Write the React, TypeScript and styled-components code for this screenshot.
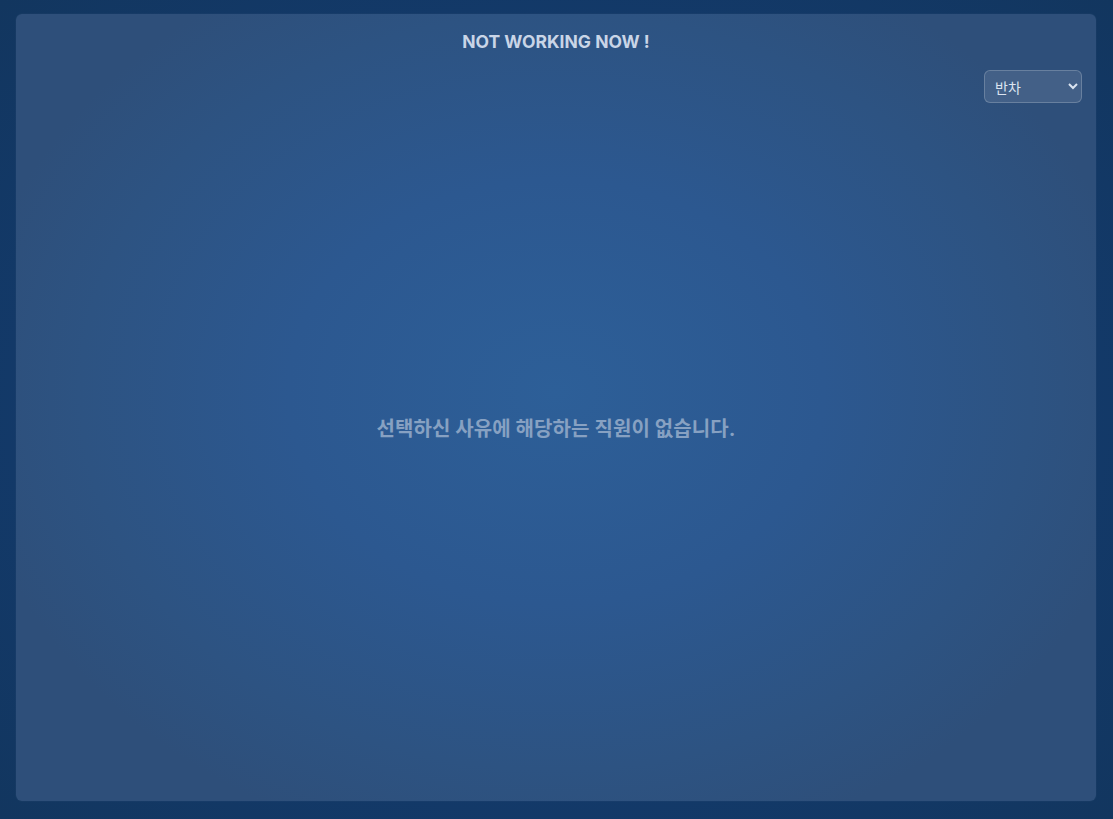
import React from "react";
import styled, { createGlobalStyle } from "styled-components";

const GlobalStyle = createGlobalStyle`
  html, body {
    margin: 0;
    padding: 0;
    height: 100%;
  }
  body {
    font-family: Inter, "Noto Sans CJK KR", "Noto Sans", sans-serif;
    background: #143a6b;
  }
  #root {
    height: 100%;
  }
`;

const Page = styled.div`
  box-sizing: border-box;
  width: 100%;
  height: 819px;
  padding: 14px 17px 18px 16px;
  display: flex;
  background: radial-gradient(ellipse at 50% 50%, #164279 0%, #133a6b 60%, #12365f 100%);
`;

const Card = styled.div`
  flex: 1;
  display: flex;
  flex-direction: column;
  border-radius: 6px;
  padding: 18px 14px 50px 14px;
  background:
    radial-gradient(ellipse 55% 60% at 50% 48%, #2d5f98 0%, #2c5890 45%, #2d5382 80%, #2e4f7a 100%);
  box-shadow: 0 0 0 1px rgba(255, 255, 255, 0.02);
`;

const Title = styled.h1`
  margin: 0;
  text-align: center;
  font-family: Inter, "Noto Sans", sans-serif;
  font-size: 17.5px;
  line-height: 20px;
  font-weight: 700;
  color: #c9d5e7;
  letter-spacing: 0;
`;

const FilterRow = styled.div`
  display: flex;
  justify-content: flex-end;
  margin-top: 18px;
`;

const Select = styled.select`
  width: 98px;
  height: 33px;
  box-sizing: border-box;
  padding: 0 6px 0 6px;
  border-radius: 6px;
  border: 1px solid rgba(255, 255, 255, 0.2);
  background: rgba(255, 255, 255, 0.1);
  color: #dbe4f0;
  font-family: "Noto Sans CJK KR", sans-serif;
  font-size: 14px;
  outline: none;
  color-scheme: dark;
`;

const Empty = styled.div`
  flex: 1;
  display: flex;
  align-items: center;
  justify-content: center;
  font-family: Inter, "Noto Sans CJK KR", sans-serif;
  font-size: 20px;
  font-weight: 700;
  letter-spacing: 0.1px;
  color: #87a1c2;
`;

export default function App() {
  return (
    <>
      <GlobalStyle />
      <Page>
        <Card>
          <Title>NOT WORKING NOW !</Title>
          <FilterRow>
            <Select defaultValue="반차">
              <option value="반차">반차</option>
              <option value="연차">연차</option>
              <option value="외근">외근</option>
            </Select>
          </FilterRow>
          <Empty>선택하신 사유에 해당하는 직원이 없습니다.</Empty>
        </Card>
      </Page>
    </>
  );
}
